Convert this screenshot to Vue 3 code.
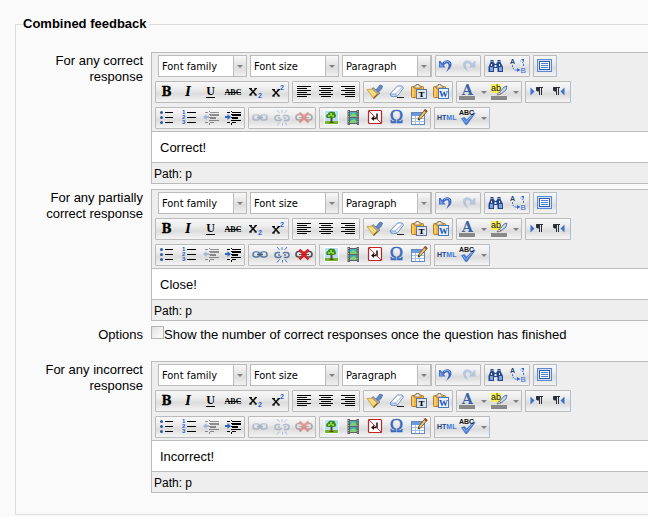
<script setup>
import { reactive } from 'vue'

const selects = [
  { label: 'Font family', wide: false },
  { label: 'Font size', wide: false },
  { label: 'Paragraph', wide: true },
]

const b = (icon, title, extra = {}) => ({ icon, title, ...extra })

const row1 = [
  [b('undo', 'Undo'), b('redo', 'Redo', { disabled: true })],
  [b('find', 'Find'), b('replace', 'Find and replace')],
  [b('full', 'Toggle fullscreen')],
]
const row2 = [
  [b('bold', 'Bold'), b('italic', 'Italic'), b('underline', 'Underline'), b('strike', 'Strikethrough'), b('sub', 'Subscript'), b('sup', 'Superscript')],
  [b('left', 'Align left'), b('center', 'Align center'), b('right', 'Align right')],
  [b('cleanup', 'Clean up messy code'), b('eraser', 'Remove formatting'), b('pastetext', 'Paste as plain text'), b('pasteword', 'Paste from Word')],
  [b('forecolor', 'Text color', { split: true }), b('backcolor', 'Background color', { split: true })],
  [b('ltr', 'Left to right'), b('rtl', 'Right to left')],
]
const row3 = [
  [b('bullist', 'Unordered list'), b('numlist', 'Ordered list'), b('outdent', 'Outdent', { disabled: true }), b('indent', 'Indent')],
  [b('link', 'Insert link', { link: true }), b('unlink', 'Unlink', { link: true }), b('nolink', 'Prevent automatic linking', { link: true })],
  [b('image', 'Insert image'), b('media', 'Insert media'), b('nbsp', 'Non-breaking space'), b('omega', 'Custom character'), b('table', 'Insert table')],
  [b('html', 'Edit HTML source'), b('spell', 'Spellchecker', { split: true })],
]
const rows = [row1, row2, row3]

const fields = reactive([
  { id: 'correct', label: 'For any correct response', text: 'Correct!', linkable: false },
  { id: 'partial', label: 'For any partially correct response', text: 'Close!', linkable: true },
  { id: 'options', label: 'Options', option: 'Show the number of correct responses once the question has finished', checked: false },
  { id: 'incorrect', label: 'For any incorrect response', text: 'Incorrect!', linkable: false },
])

const isOff = (btn, field) => btn.disabled || (btn.link && !field.linkable)
</script>

<template>
  <svg class="sprite" aria-hidden="true">
    <defs>
      <symbol id="i-undo" viewBox="0 0 22 20">
        <path d="M6 7.500C9 3 15 3.500 15.500 8c.2 3-2 5.500-5.500 8 1.500-3 3-5 2.500-7C12 6.500 9.500 7 8 9.500z" fill="#3a67c0" />
        <path d="M3 5l1.500 0 5 6.500H3z" fill="#3f72d2" /><path d="M4 7v3.500h3z" fill="#7fa8ec" />
        <path d="M8 6.500c3-2 6-1 6 1.500" fill="none" stroke="#8db4f0" />
      </symbol>
      <symbol id="i-redo" viewBox="0 0 22 20">
        <path d="M14.500 7.500C11.500 3 5.500 3.500 5 8c-.2 3 2 5.500 5.500 8-1.500-3-3-5-2.500-7 .5-2.500 3-2 4.500.5z" fill="#7296d4" />
        <path d="M17.500 5H16l-5 6.500h6.500z" fill="#7296d4" />
      </symbol>
      <symbol id="i-find" viewBox="0 0 22 20">
        <path d="M5.500 4h3v2l1.500 2h1l1.500-2V4h3v2l2.500 5v5h-5.500v-4h-3.500v4H3.500v-5l2-5z" fill="#23468c" />
        <path d="M5 11h3v4H5zM14 11h3v4h-3z" fill="#7ea4df" />
        <path d="M6.500 5h1v1h-1zM13.500 5h1v1h-1zM6 8h1v2H6zM14 8h1v2h-1zM9.500 9h2v2h-2z" fill="#e4eefc" />
      </symbol>
      <symbol id="i-replace" viewBox="0 0 22 20">
        <text x="3" y="7.500" font-family="Liberation Sans" font-size="7" font-weight="bold" fill="#26427c">A</text>
        <text x="13.500" y="17" font-family="Liberation Sans" font-size="8" fill="#2f67d8">B</text>
        <path d="M5.500 9v2.500l2 2.500H13M16.500 10V7l-3-2" fill="none" stroke="#3f74dc" stroke-dasharray="2 1" />
        <path d="M14 3h3v3zM10 12l3 2-3 2z" fill="#2f67d8" />
      </symbol>
      <symbol id="i-full" viewBox="0 0 22 20">
        <rect x="3.500" y="3.500" width="14" height="12" fill="#cfe0fa" stroke="#5c88d2" />
        <rect x="5.500" y="5.500" width="10" height="8" fill="#fff" stroke="#2e5cb0" />
        <path d="M7 7.500h7M7 9.500h7M7 11.500h7" stroke="#4d80d8" />
      </symbol>
      <symbol id="i-bold" viewBox="0 0 22 20">
        <text x="10.500" y="14" text-anchor="middle" font-family="DejaVu Serif" font-size="12" font-weight="bold" stroke="#000" stroke-width=".3">B</text>
      </symbol>
      <symbol id="i-italic" viewBox="0 0 22 20">
        <text x="10" y="14" text-anchor="middle" font-family="DejaVu Serif" font-size="12" font-weight="bold" font-style="italic">I</text>
      </symbol>
      <symbol id="i-underline" viewBox="0 0 22 20">
        <text x="10.500" y="13" text-anchor="middle" font-family="Liberation Serif" font-size="12" font-weight="bold">U</text>
        <path d="M6 15.500h9" stroke="#000" />
      </symbol>
      <symbol id="i-strike" viewBox="0 0 22 20">
        <text x="11" y="13" text-anchor="middle" font-family="Liberation Serif" font-size="8" font-weight="bold">ABC</text>
        <path d="M3 10.500h16" stroke="#000" />
      </symbol>
      <symbol id="i-sub" viewBox="0 0 22 20">
        <path d="M6 6.500l6 6.500M12 6.500L6 13" stroke="#111" stroke-width="1.600" />
        <path d="M5 6.500h3M10.500 6.500H13M5 13h3M10.500 13H13" stroke="#111" />
        <text x="14" y="16" font-family="Liberation Sans" font-size="7" font-weight="bold" fill="#2a5fd0">2</text>
      </symbol>
      <symbol id="i-sup" viewBox="0 0 22 20">
        <path d="M7 7.500l6 6.500M13 7.500L7 14" stroke="#111" stroke-width="1.600" />
        <path d="M6 7.500h3M11.500 7.500H14M6 14h3M11.500 14H14" stroke="#111" />
        <text x="14" y="8" font-family="Liberation Sans" font-size="7" font-weight="bold" fill="#2a5fd0">2</text>
      </symbol>
      <symbol id="i-left" viewBox="0 0 22 20">
        <path d="M4 4.500h14M4 6.500h10M4 8.500h14M4 10.500h10M4 12.500h14M4 14.500h10" stroke="#000" />
      </symbol>
      <symbol id="i-center" viewBox="0 0 22 20">
        <path d="M4 4.500h14M6 6.500h10M4 8.500h14M6 10.500h10M4 12.500h14M6 14.500h10" stroke="#000" />
      </symbol>
      <symbol id="i-right" viewBox="0 0 22 20">
        <path d="M4 4.500h14M8 6.500h10M4 8.500h14M8 10.500h10M4 12.500h14M8 14.500h10" stroke="#000" />
      </symbol>
      <symbol id="i-cleanup" viewBox="0 0 22 20">
        <path d="M12 8l4-5 2.500 1-1 3-3 3z" fill="#6289c8" stroke="#4c6ba2" stroke-width=".8" />
        <path d="M9 5.500l7 5.500-2 2-6.500-5.500z" fill="#9aa3b8" stroke="#5c6478" stroke-width=".6" />
        <path d="M3 7.500l5-.5 5.500 5-4 4.500z" fill="#f2cf66" stroke="#c39a42" stroke-width=".8" />
        <path d="M5.500 8.500l4.500 5M8 8.500l4 4" stroke="#fff0b0" />
        <path d="M9.500 16.500l4-4" stroke="#7a5a1c" stroke-width="1.200" />
      </symbol>
      <symbol id="i-eraser" viewBox="0 0 22 20">
        <path d="M11.500 4h4.500l1.500 2-6.500 8.500H5.500L4 12z" fill="#fff" stroke="#6b91cc" />
        <path d="M4.500 12h5l1.500 2.500H5.500z" fill="#c4d8f6" stroke="#6b91cc" stroke-width=".8" />
        <path d="M9.500 12L16.500 5" stroke="#89a8dc" />
        <path d="M11 15.500h7" stroke="#222" />
      </symbol>
      <symbol id="i-clip" viewBox="0 0 22 20">
        <rect x="3.500" y="4.500" width="12" height="11" rx="1" fill="#f2b63d" stroke="#b57a1e" />
        <path d="M5 6v9" stroke="#ffe09a" />
        <path d="M6 6V4h2V2.500h3V4h2v2z" fill="#f5ecd0" stroke="#80653c" stroke-width=".8" />
      </symbol>
      <symbol id="i-pastetext" viewBox="0 0 22 20">
        <use href="#i-clip" width="22" height="20" />
        <rect x="8.500" y="7.500" width="10" height="9" fill="#dbe5f2" stroke="#63748c" />
        <text x="13.500" y="15" text-anchor="middle" font-family="DejaVu Serif" font-size="8" font-weight="bold">T</text>
      </symbol>
      <symbol id="i-pasteword" viewBox="0 0 22 20">
        <use href="#i-clip" width="22" height="20" />
        <rect x="8.500" y="6.500" width="10" height="10" fill="#e8f1ff" stroke="#4b79be" />
        <text x="13.500" y="15" text-anchor="middle" font-family="Liberation Serif" font-size="9" font-weight="bold" fill="#174fae">W</text>
      </symbol>
      <symbol id="i-forecolor" viewBox="0 0 22 20">
        <text x="10.500" y="12.500" text-anchor="middle" font-family="DejaVu Serif" font-size="14" font-weight="bold" fill="#3962a6">A</text>
        <rect x="2" y="14" width="16" height="4" fill="#888" />
      </symbol>
      <symbol id="i-backcolor" viewBox="0 0 22 20">
        <rect x="2" y="2" width="10" height="9" fill="#f8ef5a" />
        <text x="2" y="9" font-family="Liberation Sans" font-size="9" fill="#111">ab</text>
        <path d="M10 11l5-6 3-1-1 4-5 4z" fill="#c3d6f0" stroke="#42648f" stroke-width=".8" />
        <path d="M8 13l2-3 2 2z" fill="#fff8bd" stroke="#555" stroke-width=".7" />
        <rect x="2" y="14" width="16" height="4" fill="#888" />
      </symbol>
      <symbol id="i-pil" viewBox="0 0 22 20">
        <path d="M5.500 5h6.500v1h-1v7H10V6H9v7H8V9.500H6.500L5 8.500v-3z" fill="#2b2f38" />
      </symbol>
      <symbol id="i-ltr" viewBox="0 0 22 20">
        <path d="M4.500 5.500l4 4-4 4z" fill="#3a70cf" />
        <use href="#i-pil" x="5" width="22" height="20" />
      </symbol>
      <symbol id="i-rtl" viewBox="0 0 22 20">
        <use href="#i-pil" width="22" height="20" />
        <path d="M16.500 5.500l-4 4 4 4z" fill="#3a70cf" />
      </symbol>
      <symbol id="i-bullist" viewBox="0 0 22 20">
        <g fill="#31599e"><circle cx="5.500" cy="4.500" r="1.500" /><circle cx="5.500" cy="9.500" r="1.500" /><circle cx="5.500" cy="14.500" r="1.500" /></g>
        <path d="M9 4.500h8M9 9.500h8M9 14.500h8" stroke="#000" />
      </symbol>
      <symbol id="i-numlist" viewBox="0 0 22 20">
        <g fill="#2859c4" font-family="Liberation Sans" font-size="6" font-weight="bold"><text x="4" y="6">1</text><text x="4" y="11">2</text><text x="4" y="16">3</text></g>
        <path d="M9 4.500h9M9 9.500h9M9 14.500h9" stroke="#000" />
      </symbol>
      <symbol id="i-lines" viewBox="0 0 22 20">
        <path d="M5 4.500h3M10 4.500h9M5 14.500h3M10 14.500h4M10 12.500h9M9.500 3v1M9.500 6v1M9.500 9v1M9.500 12v1M9.500 15v2" stroke="currentColor" />
        <path d="M10 6h9v2h-9zM10 9h6v2h-6z" fill="currentColor" />
      </symbol>
      <symbol id="i-outdent" viewBox="0 0 22 20">
        <use href="#i-lines" width="22" height="20" color="#000" />
        <path d="M3 9l3.500-3v2H9v2H6.500v2z" fill="#3f72c8" />
      </symbol>
      <symbol id="i-indent" viewBox="0 0 22 20">
        <use href="#i-lines" width="22" height="20" color="#000" />
        <path d="M9 9L5.500 6v2H3v2h2.500v2z" fill="#2f66cc" />
      </symbol>
      <symbol id="i-link" viewBox="0 0 22 20">
        <g fill="none" stroke="#5b79a5" stroke-width="1.500"><rect x="4" y="7" width="6.500" height="5" rx="2.500" /><rect x="11.500" y="7" width="6.500" height="5" rx="2.500" /></g>
        <path d="M8 9.500h6" stroke="#40628f" stroke-width="1.500" />
        <path d="M5 7.500h4M13 7.500h4" stroke="#b5c9e4" stroke-width=".7" />
      </symbol>
      <symbol id="i-unlink" viewBox="0 0 22 20">
        <g fill="none" stroke="#5b79a5" stroke-width="1.500"><path d="M9 7.500H6.500a2.500 2.500 0 0 0 0 5H9l1.500-1.500M13 7.500h2.500a2.500 2.500 0 0 1 0 5H13M7 10h2M13 10h2M12 8.500l1-1" /></g>
        <path d="M6 2l2.500 3M11 2v3M16 2l-2.500 3M6 17.500l2.500-3M11.500 17.500v-2.500M16 17.500l-2-3" stroke="#4c7cc3" />
      </symbol>
      <symbol id="i-nolink" viewBox="0 0 22 20">
        <g fill="none" stroke="#4e5058" stroke-width="1.600"><rect x="3" y="6.500" width="8" height="5.500" rx="2.700" /><rect x="11" y="6.500" width="8" height="5.500" rx="2.700" /></g>
        <path d="M6 9.500h10" stroke="#555" />
        <path d="M6.500 4.500l9 10M15.500 4.500l-9 10" stroke="#e0191b" stroke-width="2.600" />
      </symbol>
      <symbol id="i-image" viewBox="0 0 22 20">
        <rect x="4" y="2" width="15" height="15" fill="#fff" />
        <rect x="5" y="3" width="13" height="13" fill="#b2e0fa" />
        <path d="M5 13h13v3H5z" fill="#6fb52d" />
        <path d="M10.500 9h2v5l2 1h-6l2-1z" fill="#6b4419" />
        <path d="M7 10c-2-2 0-4 1-4 0-2 3-3 4-2 2-1 4 1 3 2 2 1 1 4-1 4z" fill="#3c8b1e" />
        <path d="M8 7h2V5h2v2h2v2h-2V8h-2v1H8z" fill="#93ce3f" />
      </symbol>
      <symbol id="i-media" viewBox="0 0 22 20">
        <path d="M5.500 2H8v1h6.500V2H17v15h-2v-1H8v1H5.500z" fill="#5d6167" />
        <path d="M8 4h6.500v5H8z" fill="#46b6b4" /><path d="M8 10h6.500v5H8z" fill="#3fa7b4" />
        <path d="M8 8l3-3 3.500 2v2H8zM8 13l4-2 2.500 2v2H8z" fill="#7fd070" />
        <path d="M6.500 3v13M15.800 3v13" stroke="#b4b4b4" stroke-dasharray="1 1.500" />
      </symbol>
      <symbol id="i-nbsp" viewBox="0 0 22 20">
        <rect x="4.500" y="2.500" width="13" height="13" rx="1" fill="#fff" stroke="#c91f28" stroke-width="1.200" />
        <path d="M13 5.500v5H9" fill="none" stroke="#111" stroke-width="1.500" /><path d="M7 10.500l3-2.500v5z" fill="#111" />
        <path d="M5 3l12.500 12.500" stroke="#d52d36" />
      </symbol>
      <symbol id="i-omega" viewBox="0 0 22 20">
        <text x="10.500" y="15" text-anchor="middle" font-family="Liberation Serif" font-size="18" fill="#3568c0" stroke="#3568c0" stroke-width=".5">Ω</text>
      </symbol>
      <symbol id="i-table" viewBox="0 0 22 20">
        <rect x="3.500" y="4.500" width="13" height="12" fill="#fff" stroke="#6487be" />
        <path d="M4 5h12v3H4z" fill="#6f99d8" />
        <path d="M4 10.500h12M4 13.500h12M7.500 8v8M11.500 8v8" stroke="#a6bfe3" />
        <path d="M10 12l1-3 6-7.500 2 2-6.500 7.500z" fill="#edc06a" stroke="#6a4a20" stroke-width=".8" />
        <path d="M16 2.500l1.500-1.500 2 2L18 4.500z" fill="#8d4030" /><path d="M10 12l.6-2 1.400 1z" fill="#222" />
      </symbol>
      <symbol id="i-html" viewBox="0 0 22 20">
        <text x="2" y="12" font-family="Liberation Sans" font-size="7" font-weight="bold" fill="#1d3f82">HT<tspan fill="#3d79dc">ML</tspan></text>
      </symbol>
      <symbol id="i-spell" viewBox="0 0 22 20">
        <path d="M4.500 10.500l3-1 2 2.500L17 4.500l1 1L10 16.500H8.500z" fill="#4b7fd8" stroke="#2b57a8" stroke-width=".5" />
        <path d="M6 11l3 3.500 7-8" fill="none" stroke="#87b2f3" />
        <text x="2" y="7" font-family="Liberation Sans" font-size="7" font-weight="bold" fill="#111">ABC</text>
      </symbol>
    </defs>
  </svg>

  <form class="page" @submit.prevent>
    <fieldset class="section">
      <legend>Combined feedback</legend>

      <div v-for="field in fields" :key="field.id" class="field" :class="{ 'field-option': field.option }">
        <template v-if="field.option">
          <span class="caption">{{ field.label }}</span>
          <label class="option">
            <input v-model="field.checked" type="checkbox">
            <span>{{ field.option }}</span>
          </label>
        </template>

        <template v-else>
          <label class="caption" :for="field.id">{{ field.label }}</label>
          <div class="editor">
            <div class="toolbar" role="toolbar" :aria-label="field.label">
              <div v-for="(row, r) in rows" :key="r" class="tools">
                <div v-if="r === 0" class="pickers">
                  <span v-for="s in selects" :key="s.label" class="picker" :class="{ wide: s.wide }">
                    <select :aria-label="s.label"><option>{{ s.label }}</option></select>
                    <span class="drop"></span>
                  </span>
                </div>
                <div v-for="(group, g) in row" :key="g" class="group">
                  <template v-for="btn in group" :key="btn.icon">
                    <button type="button" :aria-label="btn.title" :disabled="isOff(btn, field)">
                      <svg width="22" height="20"><use :href="'#i-' + btn.icon" width="22" height="20" /></svg>
                    </button>
                    <button v-if="btn.split" type="button" class="more" :aria-label="btn.title + ' menu'"></button>
                  </template>
                </div>
              </div>
            </div>
            <textarea :id="field.id" v-model="field.text" rows="1"></textarea>
            <div class="path">Path: p</div>
          </div>
        </template>
      </div>
    </fieldset>
  </form>
</template>

<style>
body {
  background: #fafafa;
}
</style>

<style scoped>
.sprite {
  position: absolute;
  width: 0;
  height: 0;
}
.page {
  padding: 16px 0 2px 15px;
  font: 13px/16px "Liberation Sans", Arial, sans-serif;
  color: #000;
}
.section {
  min-width: 0;
  margin: 0;
  padding: 20px 0 21px 7px;
  border: 1px solid #ddd;
  border-right: 0;
}
legend {
  padding: 0 2px 0 0;
  font-weight: bold;
}
.field {
  display: grid;
  grid-template-columns: 120px minmax(0, 1fr);
  column-gap: 8px;
  margin-bottom: 5px;
}
.field:last-child {
  margin-bottom: 0;
}
.field-option {
  padding-bottom: 13px;
}
.caption {
  padding: 1px 0 0 16px;
  text-align: right;
}
.option {
  display: flex;
  align-items: flex-start;
}
.option span {
  padding-top: 1px;
}
.option input {
  appearance: none;
  flex: none;
  width: 13px;
  height: 13px;
  margin: 0;
  border: 1px solid #b4b4b4;
  background: linear-gradient(135deg, #e0e0e0, #fff);
}
.option input:checked {
  background: #3568c0;
}
.editor {
  border: 1px solid #bbb;
  border-right: 0;
  background: #eee;
}
.toolbar {
  display: flex;
  flex-direction: column;
  gap: 4px;
  padding: 2px 3px;
}
.tools {
  display: flex;
  gap: 3px;
}
.pickers {
  display: flex;
  gap: 3px;
  padding-left: 3px;
}
.picker {
  display: grid;
  grid-template-columns: 1fr 13px;
  box-sizing: border-box;
  width: 89px;
  height: 22px;
  border: 1px solid #bbb;
  background: #fff;
}
.picker.wide {
  width: 90px;
  border-right-width: 2px;
}
.picker select {
  grid-area: 1 / 1 / 2 / 3;
  appearance: none;
  min-width: 0;
  padding: 2px 0 0 3px;
  border: 0;
  border-radius: 0;
  background: transparent;
  color: #000;
  font: 11px/18px "DejaVu Sans Condensed", Tahoma, sans-serif;
}
.drop {
  grid-area: 1 / 2;
  display: flex;
  justify-content: center;
  align-items: center;
  border-left: 1px solid #bbb;
  background: linear-gradient(#f8f8f8, #ddd 60%, #f0f0f0);
  pointer-events: none;
}
.drop::before,
.more::before {
  content: "";
  border: 3px solid transparent;
  border-top-color: #808080;
  border-bottom-width: 0;
}
.group {
  display: flex;
  box-sizing: border-box;
  height: 22px;
  border: 1px solid #bbb;
  border-radius: 1px;
}
.group:last-child {
  border-right-color: #a5bfdf;
}
.group button {
  display: flex;
  justify-content: center;
  align-items: center;
  width: 22px;
  height: 20px;
  padding: 0;
  border: 0;
  background: linear-gradient(#f8f8f8, #ececec 35%, #dcdcdc 60%, #f4f4f4);
}
.group button.more {
  width: 10px;
}
.group button:disabled svg {
  opacity: 0.4;
}
textarea {
  display: block;
  box-sizing: border-box;
  width: 100%;
  height: 32px;
  padding: 8px 8px 6px;
  border: solid #bbb;
  border-width: 1px 0;
  border-radius: 0;
  background: #fff;
  color: #000;
  font: inherit;
  resize: none;
  overflow: hidden;
}
.path {
  padding: 2px 0 0 2px;
  font-size: 12px;
  line-height: 18px;
}
</style>
